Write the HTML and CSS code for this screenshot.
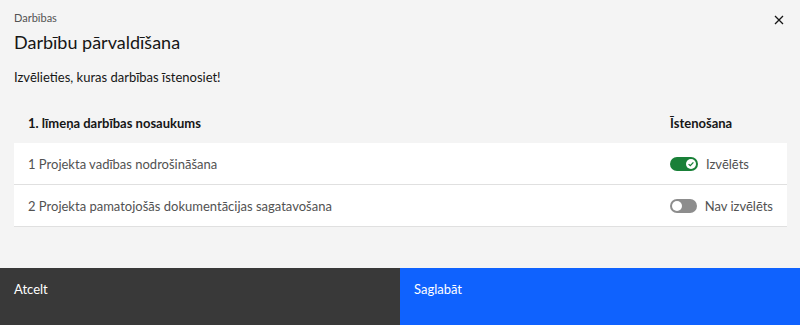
FILE: index.html
```html
<!DOCTYPE html>
<html lang="lv">
<head>
    <meta charset="UTF-8">
    <meta name="viewport" content="width=device-width, initial-scale=1.0">
    <title>Darbību pārvaldīšana</title>
    <link rel="stylesheet" href="styles.css">
</head>
<body>
    <div class="modal">
        <div class="modal-header">
            <div>
                <p class="modal-label">Darbības</p>
                <h2 class="modal-title">Darbību pārvaldīšana</h2>
            </div>
            <button class="modal-close" aria-label="Aizvērt">
                <svg width="16" height="16" viewBox="0 0 16 16"><path d="M4 4 L12 12 M12 4 L4 12" stroke="#161616" stroke-width="1.3" fill="none"/></svg>
            </button>
        </div>

        <div class="modal-content">
            <p class="intro">Izvēlieties, kuras darbības īstenosiet!</p>

            <!-- Actions table -->
            <div class="table">
                <div class="table-head">
                    <span>1. līmeņa darbības nosaukums</span>
                    <span class="col-toggle">Īstenošana</span>
                </div>
                <div class="table-row">
                    <span>1 Projekta vadības nodrošināšana</span>
                    <label class="toggle col-toggle">
                        <span class="switch on"><span class="knob">
                            <svg width="8" height="8" viewBox="0 0 8 8"><path d="M1.6 4.1 L3.3 5.7 L6.4 2.4" stroke="#198038" stroke-width="1.3" fill="none"/></svg>
                        </span></span>
                        Izvēlēts
                    </label>
                </div>
                <div class="table-row">
                    <span>2 Projekta pamatojošās dokumentācijas sagatavošana</span>
                    <label class="toggle col-toggle">
                        <span class="switch"><span class="knob"></span></span>
                        Nav izvēlēts
                    </label>
                </div>
            </div>
        </div>

        <div class="modal-footer">
            <button class="btn btn-secondary">Atcelt</button>
            <button class="btn btn-primary">Saglabāt</button>
        </div>
    </div>
</body>
</html>
```

FILE: styles.css
```css
body {
    margin: 0;
    font-family: Lato, Arial, sans-serif;
    background-color: #f4f4f4;
    color: #161616;
}
.modal {
    height: 325px;
    display: flex;
    flex-direction: column;
}
.modal-header {
    display: flex;
    justify-content: space-between;
    padding: 10px 13px 0 14px;
}
.modal-label {
    margin: 0;
    font-size: 11px;
    line-height: 16px;
    color: #525252;
}
.modal-title {
    margin: 4px 0 0 0;
    font-size: 18px;
    font-weight: 400;
    line-height: 24px;
}
.modal-close {
    width: 16px;
    height: 16px;
    padding: 0;
    margin-top: 2px;
    border: none;
    background: none;
    cursor: pointer;
}
.modal-content {
    flex: 1;
    padding: 0 13px 0 14px;
}
.intro {
    margin: 14px 0 0 0;
    font-size: 13px;
    line-height: 18px;
}
.table {
    margin-top: 17px;
    font-size: 13px;
}
.table-head,
.table-row {
    display: flex;
    align-items: center;
    padding: 0 14px;
}
.table-head {
    height: 40px;
    font-weight: 700;
}
.table-row {
    height: 41px;
    background: white;
    color: #525252;
    border-bottom: 1px solid #e0e0e0;
}
.table-head > span:first-child,
.table-row > span:first-child {
    flex: 1;
}
.col-toggle {
    width: 103px;
    white-space: nowrap;
}
.toggle {
    display: flex;
    align-items: center;
    gap: 8px;
}
.switch {
    width: 28px;
    height: 14px;
    border-radius: 7px;
    background: #8d8d8d;
    position: relative;
}
.switch.on {
    background: #198038;
}
.knob {
    position: absolute;
    top: 2px;
    left: 2px;
    width: 10px;
    height: 10px;
    border-radius: 50%;
    background: white;
    display: flex;
    align-items: center;
    justify-content: center;
}
.switch.on .knob {
    left: 16px;
}
.modal-footer {
    display: flex;
    height: 57px;
}
.btn {
    flex: 1;
    border: none;
    padding: 13px 14px;
    font-family: inherit;
    font-size: 13px;
    color: white;
    display: flex;
    align-items: flex-start;
    cursor: pointer;
}
.btn-secondary {
    background: #393939;
}
.btn-primary {
    background: #0f62fe;
}
```
